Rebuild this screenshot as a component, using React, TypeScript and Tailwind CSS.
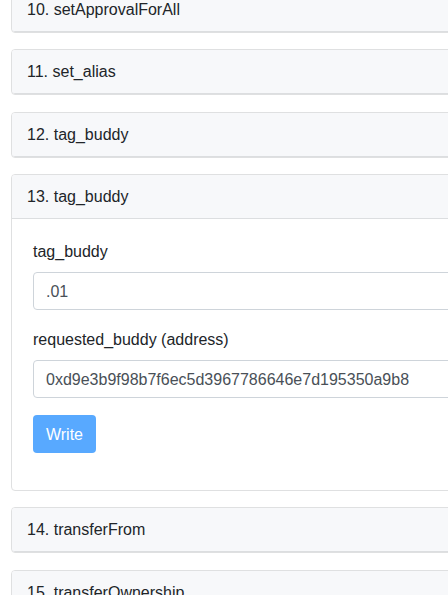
import React from 'react';

const font = { fontFamily: '"Liberation Sans", Arial, sans-serif' };

const collapsed = [
  '10. setApprovalForAll',
  '11. set_alias',
  '12. tag_buddy',
];

const after = ['14. transferFrom', '15. transferOwnership'];

const Header = ({ title, open }: { title: string; open?: boolean }) => (
  <div
    className={`bg-[#f7f8fa] px-[15px] py-[10px] text-[16px] leading-[23px] text-[#212529] border-b border-[#dcdee0] ${
      open ? '' : 'rounded-b-[3px]'
    }`}
  >
    {title}
  </div>
);

const Field = ({ label, value }: { label: string; value: string }) => (
  <div className="mb-[17px]">
    <label className="block mb-2 pt-px text-[16px] leading-[24px] text-[#212529]">{label}</label>
    <input
      readOnly
      value={value}
      className="block w-full h-[38px] px-3 pt-[2px] border border-[#ced4da] rounded-[4px] text-[16px] text-[#495057] bg-white outline-none"
      style={font}
    />
  </div>
);

export default function App() {
  return (
    <div className="w-[448px] h-[595px] overflow-hidden bg-white" style={font}>
      <div className="w-[480px] pl-[11px] -mt-[13.5px]">
        {collapsed.map((t) => (
          <div key={t} className="mb-[16.5px] border border-[#dfe0e1] rounded-[4px] overflow-hidden">
            <Header title={t} />
          </div>
        ))}

        <div className="mb-[16.5px] border border-[#dfe0e1] rounded-[4px] overflow-hidden bg-white">
          <Header title="13. tag_buddy" open />
          <div className="px-[21px] pt-[20px] pb-[19.5px]">
            <Field label="tag_buddy" value=".01" />
            <Field label="requested_buddy (address)" value="0xd9e3b9f98b7f6ec5d3967786646e7d195350a9b8" />
            <div className="mb-[17px]">
              <button
                disabled
                className="w-[63px] h-[38px] pt-[2px] rounded-[4px] bg-[#58a9ff] text-white text-[16px] leading-[24px]"
                style={font}
              >
                Write
              </button>
            </div>
          </div>
        </div>

        {after.map((t) => (
          <div key={t} className="mb-[16.5px] border border-[#dfe0e1] rounded-[4px] overflow-hidden">
            <Header title={t} />
          </div>
        ))}
      </div>
    </div>
  );
}
